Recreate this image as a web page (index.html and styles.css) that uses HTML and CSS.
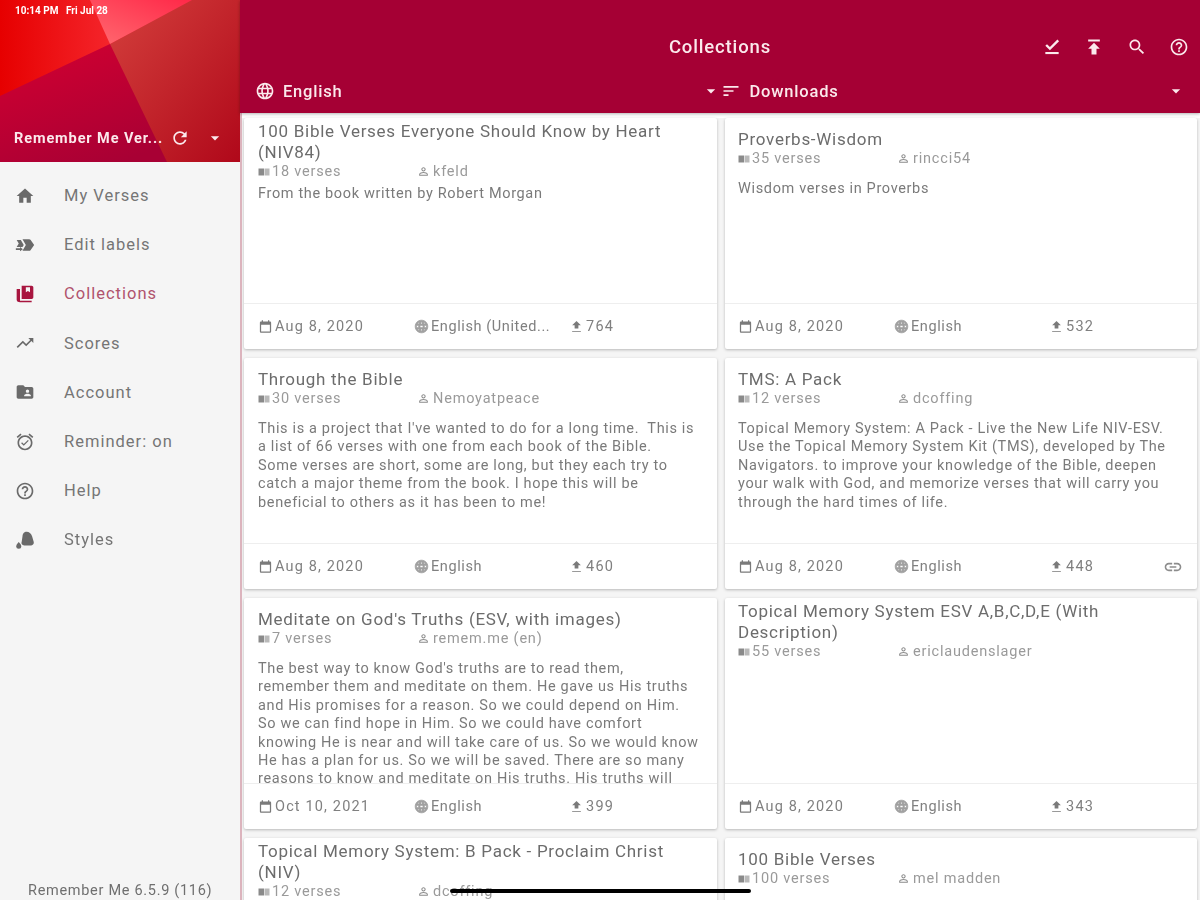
FILE: index.html
```html
<!DOCTYPE html>
<html lang="en">
<head>
    <meta charset="UTF-8">
    <meta name="viewport" content="width=device-width, initial-scale=1.0">
    <title>Collections</title>
    <link rel="stylesheet" href="styles.css">
</head>
<body>
    <!-- Icon sprite -->
    <svg class="sprite" xmlns="http://www.w3.org/2000/svg">
        <symbol id="i-home" viewBox="0 0 24 24"><path d="M10 20v-6h4v6h5v-8h3L12 3 2 12h3v8z"/></symbol>
        <symbol id="i-label" viewBox="0 0 24 24"><path d="M17 5c.7 0 1.200.3 1.600.8L23 12l-4.400 6.200c-.4.5-.9.8-1.600.8H9l4-7-4-7z"/><path d="M2 6h5l3.500 6-1.500 2.500H2l2.500-4.200z"/><path d="M1 16h5v-1.500l3.500 2.500L6 19.500V18H1z"/></symbol>
        <symbol id="i-book" viewBox="0 0 24 24"><path d="M8 2h12c1.100 0 2 .9 2 2v12c0 1.100-.9 2-2 2H8zm5 2v6l2.500-1.500L18 10V4z"/><path d="M6 6v14h14v2H6c-1.700 0-4-.9-4-3V6z"/></symbol>
        <symbol id="i-trend" viewBox="0 0 24 24"><path d="M16 6l2.290 2.290-4.880 4.880-4-4L2 16.590 3.410 18l6-6 4 4 6.300-6.290L22 12V6z"/></symbol>
        <symbol id="i-account" viewBox="0 0 24 24"><path d="M20 6h-8l-2-2H4c-1.100 0-1.990.9-1.990 2L2 18c0 1.100.9 2 2 2h16c1.100 0 2-.9 2-2V8c0-1.100-.9-2-2-2zm-5 3c1.100 0 2 .9 2 2s-.9 2-2 2-2-.9-2-2 .9-2 2-2zm4 8h-8v-1c0-1.330 2.670-2 4-2s4 .67 4 2v1z"/></symbol>
        <symbol id="i-alarm" viewBox="0 0 24 24"><path d="M22 5.720l-4.600-3.860-1.290 1.530 4.600 3.860L22 5.720zM7.880 3.390L6.600 1.860 2 5.710l1.290 1.530 4.590-3.850zM12 4c-4.970 0-9 4.030-9 9s4.020 9 9 9c4.970 0 9-4.030 9-9s-4.030-9-9-9zm0 16c-3.870 0-7-3.130-7-7s3.130-7 7-7 7 3.130 7 7-3.130 7-7 7zm-1.460-5.470L8.410 12.400l-1.060 1.060 3.180 3.180 6-6-1.060-1.060-4.930 4.950z"/></symbol>
        <symbol id="i-help" viewBox="0 0 24 24"><path d="M11 18h2v-2h-2v2zm1-16C6.480 2 2 6.480 2 12s4.480 10 10 10 10-4.480 10-10S17.520 2 12 2zm0 18c-4.410 0-8-3.590-8-8s3.590-8 8-8 8 3.590 8 8-3.590 8-8 8zm0-14c-2.210 0-4 1.790-4 4h2c0-1.100.9-2 2-2s2 .9 2 2c0 2-3 1.750-3 5h2c0-2.250 3-2.500 3-5 0-2.210-1.790-4-4-4z"/></symbol>
        <symbol id="i-fill" viewBox="0 0 24 24"><path d="M12 2.500c4-1 7 1 8.500 5l2 7c.5 2-1 4-3 4H11c-2 0-4-2-3-4l1-7c0-2 1-4 3-5z"/><path d="M4.500 14.500s-3 3-3 5a3 3 0 0 0 6 0c0-2-3-5-3-5z"/></symbol>
        <symbol id="i-refresh" viewBox="0 0 24 24"><path d="M17.650 6.350C16.200 4.900 14.210 4 12 4c-4.420 0-7.990 3.580-7.990 8s3.570 8 7.990 8c3.730 0 6.840-2.550 7.730-6h-2.080c-.82 2.330-3.040 4-5.650 4-3.310 0-6-2.690-6-6s2.690-6 6-6c1.660 0 3.140.69 4.220 1.780L13 11h7V4l-2.350 2.350z"/></symbol>
        <symbol id="i-caret" viewBox="0 0 24 24"><path d="M7 10l5 5 5-5z"/></symbol>
        <symbol id="i-globe" viewBox="0 0 24 24"><path d="M11.990 2C6.470 2 2 6.480 2 12s4.470 10 9.990 10C17.520 22 22 17.520 22 12S17.520 2 11.990 2zm6.930 6h-2.950c-.32-1.250-.78-2.450-1.380-3.560 1.840.63 3.370 1.910 4.330 3.560zM12 4.040c.83 1.200 1.480 2.530 1.910 3.960h-3.820c.43-1.430 1.080-2.760 1.910-3.960zM4.260 14C4.100 13.360 4 12.690 4 12s.1-1.360.26-2h3.380c-.08.66-.14 1.320-.14 2 0 .68.06 1.340.14 2H4.260zm.82 2h2.950c.32 1.250.78 2.450 1.380 3.560-1.840-.63-3.370-1.900-4.330-3.560zm2.950-8H5.080c.96-1.660 2.490-2.930 4.330-3.560C8.810 5.550 8.350 6.750 8.030 8zM12 19.960c-.83-1.200-1.480-2.530-1.910-3.960h3.820c-.43 1.430-1.080 2.760-1.910 3.960zM14.340 14H9.660c-.09-.66-.16-1.320-.16-2 0-.68.07-1.350.16-2h4.680c.09.65.16 1.320.16 2 0 .68-.07 1.340-.16 2zm.25 5.560c.6-1.110 1.060-2.310 1.380-3.560h2.950c-.96 1.650-2.490 2.930-4.330 3.560zM16.360 14c.08-.66.14-1.320.14-2 0-.68-.06-1.340-.14-2h3.380c.16.64.26 1.310.26 2s-.1 1.360-.26 2h-3.380z"/></symbol>
        <symbol id="i-sort" viewBox="0 0 24 24"><path d="M3 18h6v-2H3v2zM3 6v2h18V6H3zm0 7h12v-2H3v2z"/></symbol>
        <symbol id="i-check" viewBox="0 0 24 24"><path d="M4 18h16v2.500H4z"/><path d="M9.500 16L4 10.500 6 8.600l3.500 3.500L18.500 3 20.500 5z"/></symbol>
        <symbol id="i-publish" viewBox="0 0 24 24"><path d="M5 3v2.500h14V3H5zm0 11h4v7h6v-7h4l-7-7-7 7z"/></symbol>
        <symbol id="i-search" viewBox="0 0 24 24"><path d="M15.500 14h-.79l-.28-.27C15.410 12.590 16 11.110 16 9.500 16 5.910 13.090 3 9.500 3S3 5.910 3 9.500 5.910 16 9.500 16c1.610 0 3.090-.59 4.230-1.570l.27.28v.79l5 4.990L20.490 19l-4.990-5zm-6 0C7.010 14 5 11.990 5 9.500S7.010 5 9.500 5 14 7.010 14 9.500 11.990 14 9.500 14z"/></symbol>
        <symbol id="i-verses" viewBox="0 0 24 24"><path d="M1 5h11v14H1z"/><path opacity=".6" d="M13 5h10v14H13z"/></symbol>
        <symbol id="i-person" viewBox="0 0 24 24"><path d="M12 5.900c1.160 0 2.100.94 2.100 2.100s-.94 2.100-2.100 2.100S9.900 9.160 9.900 8s.94-2.100 2.100-2.100m0 9c2.970 0 6.100 1.460 6.100 2.100v1.100H5.900V17c0-.64 3.130-2.100 6.100-2.100M12 4C9.790 4 8 5.790 8 8s1.790 4 4 4 4-1.790 4-4-1.790-4-4-4zm0 9c-2.670 0-8 1.340-8 4v3h16v-3c0-2.660-5.330-4-8-4z"/></symbol>
        <symbol id="i-date" viewBox="0 0 24 24"><path d="M19 4h-1V2h-2v2H8V2H6v2H5c-1.110 0-2 .9-2 2v14c0 1.100.89 2 2 2h14c1.100 0 2-.9 2-2V6c0-1.100-.9-2-2-2zm0 16H5V9h14v11z"/></symbol>
        <symbol id="i-up" viewBox="0 0 24 24"><path d="M9 15h6v-5h4l-7-7-7 7h4zm-4 4h14v1.500H5z"/></symbol>
        <symbol id="i-link" viewBox="0 0 24 24"><path d="M3.900 12c0-1.710 1.390-3.100 3.100-3.100h4V7H7c-2.760 0-5 2.240-5 5s2.240 5 5 5h4v-1.900H7c-1.710 0-3.100-1.390-3.100-3.100zM8 13h8v-2H8v2zm9-6h-4v1.900h4c1.710 0 3.100 1.390 3.100 3.100s-1.390 3.100-3.100 3.100h-4V17h4c2.760 0 5-2.240 5-5s-2.240-5-5-5z"/></symbol>
    </svg>

    <div class="app">
        <!-- Drawer -->
        <aside class="drawer">
            <div class="drawer-head">
                <svg class="drawer-art" viewBox="0 0 240 162" preserveAspectRatio="none">
                    <defs>
                        <linearGradient id="g-base" x1="0" y1="0" x2="0.5" y2="1">
                            <stop offset="0" stop-color="#e00030"/>
                            <stop offset="1" stop-color="#a80034"/>
                        </linearGradient>
                        <linearGradient id="g-bright" x1="0" y1="0" x2="1" y2="0">
                            <stop offset="0" stop-color="#e60000"/>
                            <stop offset="1" stop-color="#ff3f4a"/>
                        </linearGradient>
                        <linearGradient id="g-right" x1="0" y1="0" x2="1" y2="1">
                            <stop offset="0" stop-color="#d4403c"/>
                            <stop offset="1" stop-color="#b0081a"/>
                        </linearGradient>
                        <linearGradient id="g-light" x1="0" y1="1" x2="1" y2="0">
                            <stop offset="0" stop-color="#ff6a70"/>
                            <stop offset="1" stop-color="#ff2848"/>
                        </linearGradient>
                    </defs>
                    <rect width="240" height="162" fill="url(#g-base)"/>
                    <polygon points="110,44 190,0 240,0 240,162 167,162" fill="url(#g-right)"/>
                    <polygon points="0,0 190,0 110,44 0,96" fill="url(#g-bright)"/>
                    <polygon points="90,0 192,0 110,44" fill="url(#g-light)"/>
                </svg>
                <div class="account-row">
                    <span class="account-name">Remember Me Ver...</span>
                    <svg class="icon icon-refresh"><use href="#i-refresh"/></svg>
                    <svg class="icon icon-caret"><use href="#i-caret"/></svg>
                </div>
            </div>

            <nav class="drawer-nav">
                <a class="nav-item"><svg class="icon"><use href="#i-home"/></svg>My Verses</a>
                <a class="nav-item"><svg class="icon"><use href="#i-label"/></svg>Edit labels</a>
                <a class="nav-item active"><svg class="icon"><use href="#i-book"/></svg>Collections</a>
                <a class="nav-item"><svg class="icon"><use href="#i-trend"/></svg>Scores</a>
                <a class="nav-item"><svg class="icon"><use href="#i-account"/></svg>Account</a>
                <a class="nav-item"><svg class="icon"><use href="#i-alarm"/></svg>Reminder: on</a>
                <a class="nav-item"><svg class="icon"><use href="#i-help"/></svg>Help</a>
                <a class="nav-item"><svg class="icon"><use href="#i-fill"/></svg>Styles</a>
            </nav>

            <div class="version">Remember Me 6.5.9 (116)</div>
        </aside>

        <!-- Main column -->
        <main class="main">
            <header class="appbar">
                <div class="toolbar">
                    <h1 class="page-title">Collections</h1>
                    <div class="actions">
                        <svg class="icon"><use href="#i-check"/></svg>
                        <svg class="icon"><use href="#i-publish"/></svg>
                        <svg class="icon"><use href="#i-search"/></svg>
                        <svg class="icon"><use href="#i-help"/></svg>
                    </div>
                </div>
                <div class="filters">
                    <div class="filter">
                        <svg class="icon"><use href="#i-globe"/></svg>
                        <span class="filter-label">English</span>
                        <svg class="icon icon-caret"><use href="#i-caret"/></svg>
                    </div>
                    <div class="filter">
                        <svg class="icon"><use href="#i-sort"/></svg>
                        <span class="filter-label">Downloads</span>
                        <svg class="icon icon-caret"><use href="#i-caret"/></svg>
                    </div>
                </div>
            </header>

            <div class="list">
                <article class="card">
                    <div class="card-head">
                        <h2 class="card-title">100 Bible Verses Everyone Should Know by Heart (NIV84)</h2>
                        <div class="card-meta">
                            <span class="meta-count"><svg class="icon"><use href="#i-verses"/></svg>18 verses</span>
                            <span class="meta-author"><svg class="icon"><use href="#i-person"/></svg>kfeld</span>
                        </div>
                    </div>
                    <p class="card-text">From the book written by Robert Morgan</p>
                    <div class="card-foot">
                        <span class="foot-date"><svg class="icon"><use href="#i-date"/></svg>Aug 8, 2020</span>
                        <span class="foot-lang"><svg class="icon"><use href="#i-globe"/></svg>English (United...</span>
                        <span class="foot-count"><svg class="icon"><use href="#i-up"/></svg>764</span>
                    </div>
                </article>

                <article class="card">
                    <div class="card-head">
                        <h2 class="card-title">Proverbs-Wisdom</h2>
                        <div class="card-meta">
                            <span class="meta-count"><svg class="icon"><use href="#i-verses"/></svg>35 verses</span>
                            <span class="meta-author"><svg class="icon"><use href="#i-person"/></svg>rincci54</span>
                        </div>
                    </div>
                    <p class="card-text">Wisdom verses in Proverbs</p>
                    <div class="card-foot">
                        <span class="foot-date"><svg class="icon"><use href="#i-date"/></svg>Aug 8, 2020</span>
                        <span class="foot-lang"><svg class="icon"><use href="#i-globe"/></svg>English</span>
                        <span class="foot-count"><svg class="icon"><use href="#i-up"/></svg>532</span>
                    </div>
                </article>

                <article class="card">
                    <div class="card-head">
                        <h2 class="card-title">Through the Bible</h2>
                        <div class="card-meta">
                            <span class="meta-count"><svg class="icon"><use href="#i-verses"/></svg>30 verses</span>
                            <span class="meta-author"><svg class="icon"><use href="#i-person"/></svg>Nemoyatpeace</span>
                        </div>
                    </div>
                    <p class="card-text">This is a project that I've wanted to do for a long time.&nbsp; This is<br>a list of 66 verses with one from each book of the Bible.<br>Some verses are short, some are long, but they each try to<br>catch a major theme from the book. I hope this will be<br>beneficial to others as it has been to me!</p>
                    <div class="card-foot">
                        <span class="foot-date"><svg class="icon"><use href="#i-date"/></svg>Aug 8, 2020</span>
                        <span class="foot-lang"><svg class="icon"><use href="#i-globe"/></svg>English</span>
                        <span class="foot-count"><svg class="icon"><use href="#i-up"/></svg>460</span>
                    </div>
                </article>

                <article class="card">
                    <div class="card-head">
                        <h2 class="card-title">TMS: A Pack</h2>
                        <div class="card-meta">
                            <span class="meta-count"><svg class="icon"><use href="#i-verses"/></svg>12 verses</span>
                            <span class="meta-author"><svg class="icon"><use href="#i-person"/></svg>dcoffing</span>
                        </div>
                    </div>
                    <p class="card-text">Topical Memory System: A Pack - Live the New Life NIV-ESV.<br>Use the Topical Memory System Kit (TMS), developed by The<br>Navigators. to improve your knowledge of the Bible, deepen<br>your walk with God, and memorize verses that will carry you<br>through the hard times of life.</p>
                    <div class="card-foot">
                        <span class="foot-date"><svg class="icon"><use href="#i-date"/></svg>Aug 8, 2020</span>
                        <span class="foot-lang"><svg class="icon"><use href="#i-globe"/></svg>English</span>
                        <span class="foot-count"><svg class="icon"><use href="#i-up"/></svg>448</span>
                        <svg class="icon foot-link"><use href="#i-link"/></svg>
                    </div>
                </article>

                <article class="card">
                    <div class="card-head">
                        <h2 class="card-title">Meditate on God's Truths (ESV, with images)</h2>
                        <div class="card-meta">
                            <span class="meta-count"><svg class="icon"><use href="#i-verses"/></svg>7 verses</span>
                            <span class="meta-author"><svg class="icon"><use href="#i-person"/></svg>remem.me (en)</span>
                        </div>
                    </div>
                    <p class="card-text">The best way to know God's truths are to read them,<br>remember them and meditate on them. He gave us His truths<br>and His promises for a reason. So we could depend on Him.<br>So we can find hope in Him. So we could have comfort<br>knowing He is near and will take care of us. So we would know<br>He has a plan for us. So we will be saved. There are so many<br>reasons to know and meditate on His truths. His truths will</p>
                    <div class="card-foot">
                        <span class="foot-date"><svg class="icon"><use href="#i-date"/></svg>Oct 10, 2021</span>
                        <span class="foot-lang"><svg class="icon"><use href="#i-globe"/></svg>English</span>
                        <span class="foot-count"><svg class="icon"><use href="#i-up"/></svg>399</span>
                    </div>
                </article>

                <article class="card">
                    <div class="card-head">
                        <h2 class="card-title">Topical Memory System ESV A,B,C,D,E (With Description)</h2>
                        <div class="card-meta">
                            <span class="meta-count"><svg class="icon"><use href="#i-verses"/></svg>55 verses</span>
                            <span class="meta-author"><svg class="icon"><use href="#i-person"/></svg>ericlaudenslager</span>
                        </div>
                    </div>
                    <div class="card-text"></div>
                    <div class="card-foot">
                        <span class="foot-date"><svg class="icon"><use href="#i-date"/></svg>Aug 8, 2020</span>
                        <span class="foot-lang"><svg class="icon"><use href="#i-globe"/></svg>English</span>
                        <span class="foot-count"><svg class="icon"><use href="#i-up"/></svg>343</span>
                    </div>
                </article>

                <article class="card">
                    <div class="card-head">
                        <h2 class="card-title">Topical Memory System: B Pack - Proclaim Christ (NIV)</h2>
                        <div class="card-meta">
                            <span class="meta-count"><svg class="icon"><use href="#i-verses"/></svg>12 verses</span>
                            <span class="meta-author"><svg class="icon"><use href="#i-person"/></svg>dcoffing</span>
                        </div>
                    </div>
                </article>

                <article class="card">
                    <div class="card-head">
                        <h2 class="card-title">100 Bible Verses</h2>
                        <div class="card-meta">
                            <span class="meta-count"><svg class="icon"><use href="#i-verses"/></svg>100 verses</span>
                            <span class="meta-author"><svg class="icon"><use href="#i-person"/></svg>mel madden</span>
                        </div>
                    </div>
                </article>
            </div>
        </main>
    </div>

    <!-- iPad system overlays -->
    <div class="status-left">10:14 PM&nbsp;&nbsp; Fri Jul 28</div>
    <div class="status-dots"><i></i><i></i><i></i></div>
    <div class="status-right">
        <svg class="wifi" viewBox="0 0 24 18"><path d="M12 17L0 5c6.500-6 17.500-6 24 0z"/></svg>
        <span>100%</span>
        <i class="battery"></i>
    </div>
    <div class="home-bar"></div>
</body>
</html>
```

FILE: styles.css
```css
html, body {
    height: 100%;
    margin: 0;
    overflow: hidden;
}

body {
    background-color: #f5f5f5;
    color: #757575;
    font-family: Roboto, 'Liberation Sans', sans-serif;
    /* the reference is a soft, upscaled capture */
    filter: blur(0.7px);
}

.sprite {
    display: none;
}

.icon {
    width: 20px;
    height: 20px;
    flex-shrink: 0;
    fill: currentColor;
}

.app {
    display: flex;
    height: 900px;
}

/* Drawer */
.drawer {
    display: flex;
    flex-direction: column;
    width: 240px;
    flex-shrink: 0;
    background-color: #f5f5f5;
}

.drawer-head {
    position: relative;
    display: flex;
    flex-direction: column;
    justify-content: flex-end;
    height: 162px;
    color: #fbe9ec;
}

.drawer-art {
    position: absolute;
    top: 0;
    left: 0;
    width: 100%;
    height: 100%;
}

.account-row {
    position: relative;
    display: flex;
    align-items: center;
    height: 48px;
    padding: 0 14px;
}

.account-name {
    width: 150px;
    font-size: 14.500px;
    font-weight: 700;
    letter-spacing: 0.900px;
    white-space: nowrap;
}

.icon-refresh {
    width: 20px;
    height: 20px;
    margin-left: 6px;
}

.icon-caret {
    width: 20px;
    height: 20px;
}

.account-row .icon-caret {
    margin-left: 15px;
}

.drawer-nav {
    display: flex;
    flex-direction: column;
    padding-top: 9px;
}

.nav-item {
    display: flex;
    align-items: center;
    gap: 29px;
    height: 49.200px;
    padding-left: 15px;
    font-size: 16.500px;
    letter-spacing: 1px;
    color: #757575;
}

.nav-item .icon {
    color: #6a6a6a;
}

.nav-item.active .icon {
    color: #a8153f;
}

.nav-item.active {
    color: #b0536d;
}

.version {
    margin-top: auto;
    padding-left: 28px;
    height: 18px;
    font-size: 14.500px;
    letter-spacing: 0.700px;
    color: #6f6f6f;
}

/* Main column */
.main {
    display: flex;
    flex-direction: column;
    flex: 1;
    min-width: 0;
}

.appbar {
    height: 113px;
    flex-shrink: 0;
    background-color: #a50034;
    color: #fbe9ec;
    box-shadow: 0 1px 3px rgba(0, 0, 0, 0.3);
    position: relative;
    z-index: 1;
}

.toolbar {
    position: relative;
    display: flex;
    align-items: center;
    justify-content: center;
    height: 69px;
    padding-top: 25px;
    box-sizing: border-box;
}

.page-title {
    margin: 0;
    font-size: 18.500px;
    font-weight: 500;
    letter-spacing: 0.850px;
}

.actions {
    position: absolute;
    right: 11px;
    top: 37px;
    display: flex;
    gap: 22.500px;
}

.filters {
    display: flex;
    height: 44px;
}

.filter {
    display: flex;
    flex: 1;
    align-items: center;
    gap: 8px;
    padding: 0 0 0 15px;
}

.filter + .filter {
    padding: 0 14px 0 0;
    gap: 9px;
}

.filter-label {
    flex: 1;
    font-size: 16.500px;
    letter-spacing: 0.800px;
    font-weight: 500;
}

/* Collection cards */
.list {
    flex: 1;
    display: grid;
    grid-template-columns: 473px 472px;
    grid-auto-rows: 231px;
    gap: 9px 8px;
    padding: 5px 0 0 2px;
    border-left: 2px solid #dcb4bd;
    overflow: hidden;
    background: linear-gradient(#ffffff 5px, #f5f5f5 5px);
}

.card {
    display: flex;
    flex-direction: column;
    background-color: #ffffff;
    box-shadow: 0 1px 3px rgba(0, 0, 0, 0.25);
    border-radius: 2px;
    padding: 0 14px;
    min-height: 0;
}

.card:nth-child(even) {
    padding-left: 13px;
}

.card-head {
    display: flex;
    flex-direction: column;
    justify-content: center;
    flex-shrink: 0;
    box-sizing: border-box;
    min-height: 60px;
    padding: 3px 0 2px;
}

.card-title {
    margin: 0;
    font-size: 17px;
    font-weight: 400;
    line-height: 21px;
    letter-spacing: 0.720px;
    color: #6c6c6c;
}

.card-meta {
    display: flex;
    align-items: center;
    height: 19px;
    margin-top: -1px;
    font-size: 14.500px;
    letter-spacing: 0.800px;
    color: #9a9a9a;
}

.card-meta .icon {
    width: 12px;
    height: 12px;
    margin-right: 2px;
    color: #8a8a8a;
}

.meta-count,
.meta-author {
    display: flex;
    align-items: center;
}

.meta-count {
    width: 159px;
}

.meta-author .icon {
    width: 13px;
    height: 13px;
    margin-right: 3px;
}

.card-text {
    flex: 1;
    min-height: 0;
    margin: 2px 0 0;
    overflow: hidden;
    white-space: nowrap;
    font-size: 14.500px;
    line-height: 18.400px;
    letter-spacing: 0.650px;
    color: #7a7a7a;
}

.card-foot {
    display: flex;
    align-items: center;
    flex-shrink: 0;
    height: 45px;
    margin: 0 -14px;
    padding: 0 14px;
    border-top: 1px solid #eeeeee;
    font-size: 14.500px;
    letter-spacing: 0.600px;
    color: #808080;
}

.card:nth-child(even) .card-foot {
    margin-left: -13px;
    padding-left: 13px;
}

.card-foot .icon {
    width: 15px;
    height: 15px;
    margin-right: 2px;
    color: #7a7a7a;
}

.foot-date,
.foot-lang,
.foot-count {
    display: flex;
    align-items: center;
}

.foot-date {
    width: 156px;
    letter-spacing: 1.150px;
}

.foot-lang {
    width: 155px;
}

.foot-lang .icon {
    color: #a0a0a0;
    stroke: currentColor;
    stroke-width: 1.500px;
}

.foot-count {
    flex: 1;
    letter-spacing: 1.250px;
}

.card-foot .foot-link {
    width: 20px;
    height: 20px;
    margin: 0;
    color: #8c8c8c;
}

/* System overlays */
.status-left,
.status-right {
    position: absolute;
    top: 5px;
    font-size: 10px;
    font-weight: 700;
    color: #fff;
}

.status-left {
    left: 15px;
}

.status-right {
    right: 15px;
    display: flex;
    align-items: center;
    gap: 3px;
    letter-spacing: 0.500px;
}

.wifi {
    width: 13px;
    height: 9px;
    fill: #fff;
}

.battery {
    display: block;
    width: 20px;
    height: 8px;
    border-radius: 2px;
    background-color: #fff;
}

.status-dots {
    position: absolute;
    top: 9px;
    left: 591px;
    display: flex;
    gap: 2px;
}

.status-dots i {
    width: 4px;
    height: 3px;
    border-radius: 50%;
    background-color: #d98ca4;
}

.home-bar {
    position: absolute;
    left: 450px;
    top: 889px;
    width: 301px;
    height: 4px;
    border-radius: 2px;
    background-color: #000;
}
```
